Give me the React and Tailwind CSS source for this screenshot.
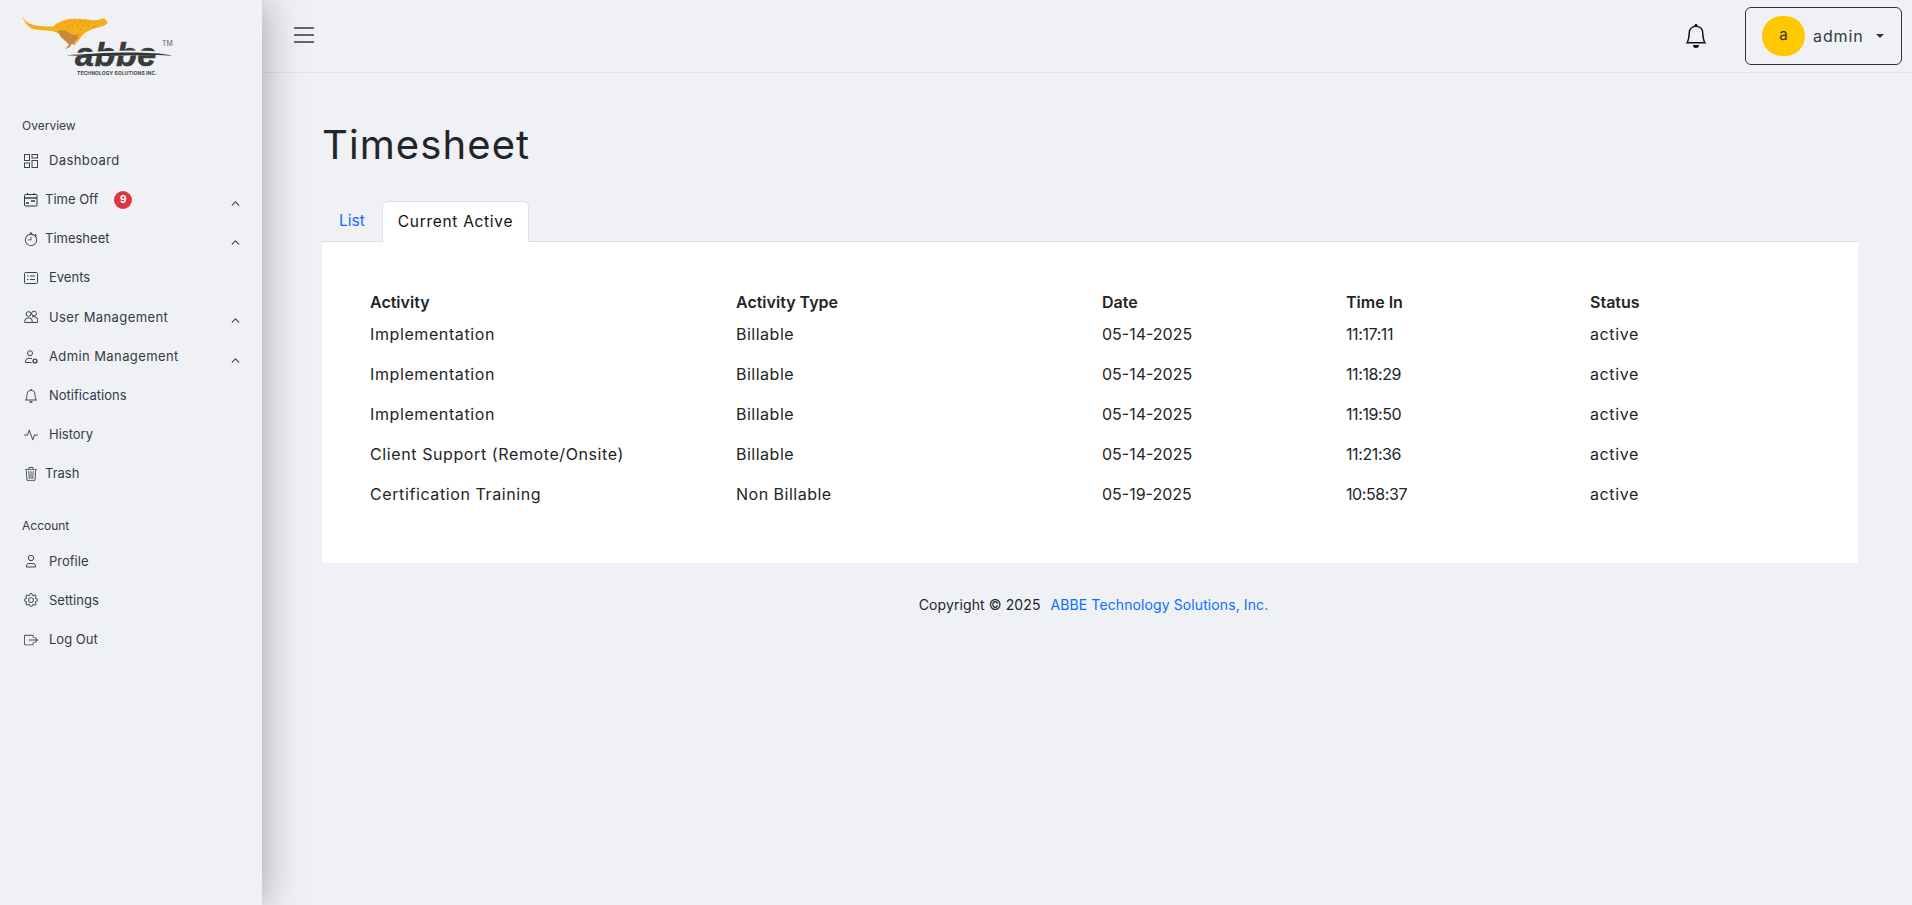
import React from 'react';
import { BsActivity, BsBell, BsBoxArrowRight, BsChevronUp, BsGear, BsStopwatch, BsTrash3 } from 'react-icons/bs';

const font = 'font-["Inter","Noto_Sans",sans-serif]';

// small hand drawn sidebar icons
const DashIcon = () => (
  <svg width="14" height="14" viewBox="0 0 14 14" fill="none" stroke="#3f4652" strokeWidth="1">
    <rect x="0.5" y="0.5" width="5" height="6" />
    <rect x="8" y="0.5" width="5.5" height="3.5" />
    <rect x="0.5" y="9" width="5" height="4.5" />
    <rect x="8" y="6.5" width="5.5" height="7" />
  </svg>
);
const CalIcon = () => (
  <svg width="14" height="14" viewBox="0 0 14 14" fill="none" stroke="#2f3540" strokeWidth="1">
    <rect x="0.5" y="1.5" width="12.5" height="11.5" rx="1" />
    <path d="M3.5 0v2M10 0v2" />
    <path d="M1 5h12" strokeWidth="1.4" />
    <path d="M7 8h4M2 10h3" strokeWidth="1.6" />
  </svg>
);
const EventIcon = () => (
  <svg width="14" height="12" viewBox="0 0 14 12" fill="none" stroke="#3f4652" strokeWidth="1">
    <rect x="0.5" y="0.5" width="13" height="11" rx="1" />
    <path d="M3 4h1.5M3 7.5h1.5M6 4h5M6 7.5h5" />
  </svg>
);
const UsersIcon = () => (
  <svg width="14" height="14" viewBox="0 0 14 14" fill="none" stroke="#3f4652" strokeWidth="1">
    <circle cx="4.5" cy="4" r="2.4" />
    <circle cx="10" cy="3.5" r="2.4" />
    <path d="M0.8 12.5v-1.5a3 3 0 0 1 3-3h1.4a3 3 0 0 1 3 3v1.5zM8 6.8h2.6a3 3 0 0 1 3 3v2.7H8" />
  </svg>
);
const AdminIcon = () => (
  <svg width="14" height="14" viewBox="0 0 14 14" fill="none" stroke="#3f4652" strokeWidth="1">
    <circle cx="6" cy="3.2" r="2.5" />
    <path d="M8 8.4H4.5a3 3 0 0 0-3 2.6v1.5h6" />
    <circle cx="11" cy="11" r="1.9" strokeWidth="1.4" />
  </svg>
);
const ProfileIcon = () => (
  <svg width="14" height="14" viewBox="0 0 14 14" fill="none" stroke="#3f4652" strokeWidth="1">
    <circle cx="7" cy="4" r="2.7" />
    <path d="M2.5 13v-1.2a2.5 2.5 0 0 1 2.5-2.3h4a2.5 2.5 0 0 1 2.5 2.3V13z" />
  </svg>
);

const spots = [
  [150, 38], [165, 34], [180, 36], [195, 33], [210, 36], [225, 38], [240, 40], [172, 46], [188, 46], [204, 46], [220, 48], [158, 50], [236, 50], [196, 58],
];

// logo drawing coordinates are 3x so the shapes stay easy to tweak
const Logo = () => (
  <div className="relative h-[70px] w-[165px]">
    <svg className="absolute left-0 top-0" width="165" height="70" viewBox="0 0 495 210">
      <path d="M21 18 C28 30 36 40 60 46 C80 50 100 50 116 49 C124 38 144 30 165 27 C190 24 215 28 240 31 C250 30 260 27 268 25 L278 37 C276 44 268 48 252 52 C232 56 214 64 202 76 C196 84 190 92 186 98 L166 92 L148 78 L126 68 C110 60 80 62 56 58 C40 54 28 36 21 18 Z" fill="#f6ae1a" />
      <path d="M128 64 C138 58 152 60 166 70 C174 76 184 76 190 72 C192 80 186 88 178 96 L184 104 L170 102 L164 112 L150 118 L162 104 L152 94 L138 82 Z" fill="#c8873a" />
      {spots.map(([cx, cy]) => (
        <circle key={cx + '-' + cy} cx={cx} cy={cy} r="1.8" fill="#b9791f" />
      ))}
    </svg>
    <span className='absolute left-[60px] top-[27px] text-[34px] font-bold italic leading-none tracking-[0.6px] text-[#3a3a3a] [-webkit-text-stroke:0.6px_#3a3a3a] font-["Liberation_Sans",sans-serif]'>abbe</span>
    <svg className="absolute left-0 top-0" width="165" height="70" viewBox="0 0 495 210">
      <path d="M155 133 C230 126 400 116 472 134 C400 128 260 142 155 133 Z" fill="#eff1f5" stroke="#eff1f5" strokeWidth="4" />
      <path d="M155 136 C230 130 400 120 472 137 C400 130 260 143 155 136 Z" fill="#333" />
    </svg>
    <span className={'absolute left-[147px] top-[30px] text-[7px] leading-none text-[#666] ' + font}>TM</span>
    <span className={'absolute left-[62px] top-[61px] whitespace-nowrap text-[5px] font-bold leading-none tracking-[0.1px] text-[#444] ' + font}>TECHNOLOGY SOLUTIONS INC.</span>
  </div>
);

const overview = [
  { label: 'Dashboard', icon: <DashIcon />, wide: true },
  { label: 'Time Off', icon: <CalIcon />, tight: true, badge: 9, caret: true },
  { label: 'Timesheet', icon: <BsStopwatch size={14} />, tight: true, caret: true },
  { label: 'Events', icon: <EventIcon /> },
  { label: 'User Management', icon: <UsersIcon />, wide: true, caret: true },
  { label: 'Admin Management', icon: <AdminIcon />, wide: true, caret: true },
  { label: 'Notifications', icon: <BsBell size={14} /> },
  { label: 'History', icon: <BsActivity size={14} /> },
  { label: 'Trash', icon: <BsTrash3 size={14} />, tight: true },
];

const account = [
  { label: 'Profile', icon: <ProfileIcon /> },
  { label: 'Settings', icon: <BsGear size={14} /> },
  { label: 'Log Out', icon: <BsBoxArrowRight size={14} /> },
];

const rows = [
  ['Implementation', 'Billable', '05-14-2025', '11:17:11', 'active'],
  ['Implementation', 'Billable', '05-14-2025', '11:18:29', 'active'],
  ['Implementation', 'Billable', '05-14-2025', '11:19:50', 'active'],
  ['Client Support (Remote/Onsite)', 'Billable', '05-14-2025', '11:21:36', 'active'],
  ['Certification Training', 'Non Billable', '05-19-2025', '10:58:37', 'active'],
];

const headers = ['Activity', 'Activity Type', 'Date', 'Time In', 'Status'];

const cellSpacing = ['tracking-[0.6px]', 'tracking-[0.5px]', '', 'tracking-[-0.4px]', 'tracking-[0.6px]'];

const NavItem = ({ item }) => (
  <a className="flex h-[39.2px] items-center pl-6 pr-[18px] text-[13px] text-[#343a47]">
    <span className="flex w-[14px] justify-center text-[#3f4652]">{item.icon}</span>
    <span className={(item.tight ? 'ml-[7px]' : 'ml-[11px]') + (item.wide ? ' tracking-[0.4px]' : '')}>{item.label}</span>
    {item.badge && (
      <span className="ml-4 flex h-[18px] w-[18px] items-center justify-center rounded-full bg-[#dc3545] text-[10px] font-bold text-white">
        {item.badge}
      </span>
    )}
    {item.caret && <BsChevronUp size={9} strokeWidth={0.8} className="ml-auto mr-1 mt-[7px] text-[#333]" />}
  </a>
);

const App = () => (
  <div className={'flex h-[905px] overflow-hidden bg-[#eff1f5] text-[#212529] ' + font}>
    <aside className="z-10 flex w-[262px] shrink-0 flex-col bg-[#eff1f5] shadow-[0_0_40px_rgba(0,0,0,0.35)]">
      <div className="pl-[15px] pt-[10px]">
        <Logo />
      </div>
      <p className="mt-[36px] pl-[22px] text-[12px] leading-5 text-[#343a47]">Overview</p>
      <nav className="mt-[5px]">
        {overview.map((item) => (
          <NavItem key={item.label} item={item} />
        ))}
      </nav>
      <p className="mt-[22px] pl-[22px] text-[12px] leading-5 text-[#343a47]">Account</p>
      <nav className="mt-[6px]">
        {account.map((item) => (
          <NavItem key={item.label} item={item} />
        ))}
      </nav>
    </aside>

    <div className="flex min-w-0 flex-1 flex-col">
      <header className="flex h-[73px] items-center justify-between border-b border-[#e1e3e8] pb-px pl-[32px] pr-[10px]">
        <div className="mb-px flex w-[20px] flex-col gap-[4.7px]">
          <span className="h-[2px] bg-[#666]" />
          <span className="h-[2px] bg-[#666]" />
          <span className="h-[2px] bg-[#666]" />
        </div>
        <div className="flex items-center">
          <BsBell size={24} className="text-[#111]" />
          <div className="ml-[37px] flex h-[58px] w-[157px] items-center rounded-md border border-[#333] pl-4">
            <span className="flex h-[40px] w-[43px] items-center justify-center rounded-full bg-[#ffc800] text-[15px] text-[#333]">a</span>
            <span className="ml-2 text-[16px] tracking-[0.9px] text-[#333a47]">admin</span>
            <span className="ml-[12px] h-0 w-0 border-x-[4px] border-t-[4px] border-x-transparent border-t-[#333]" />
          </div>
        </div>
      </header>

      <main className="flex flex-col pl-[60px] pr-[54px]">
        <h1 className="mt-[48px] text-[40px] font-normal leading-[48px] tracking-[1.1px] text-[#212529]">Timesheet</h1>
        <div className="relative mt-[32px] flex h-[41px] items-end border-b border-[#dee2e6]">
          <a className="flex h-[40px] items-center px-[17px] text-[15.5px] text-[#0d6efd]">List</a>
          <a className="-mb-px flex h-[41px] items-center rounded-t-md border border-b-0 border-[#dee2e6] bg-white px-[15px] text-[15.5px] tracking-[0.7px] text-[#111]">
            Current Active
          </a>
        </div>
        <section className="h-[321px] bg-white pl-12 pt-[48px]">
          <div className="grid grid-cols-[366px_366px_244px_244px_244px] text-[16px]">
            {headers.map((h) => (
              <div key={h} className="h-6 font-semibold leading-6">{h}</div>
            ))}
          </div>
          {rows.map((row, i) => (
            <div key={i} className={(i === 0 ? 'mt-2' : 'mt-4') + ' grid grid-cols-[366px_366px_244px_244px_244px] text-[16px] leading-6'}>
              {row.map((cell, j) => (
                <div key={j} className={cellSpacing[j]}>{cell}</div>
              ))}
            </div>
          ))}
        </section>
        <footer className="mt-[31px] pl-[7px] text-center text-[14px] leading-[21px] tracking-[0.1px]">
          Copyright © 2025 <a className="ml-[6px] text-[#0d6efd]">ABBE Technology Solutions, Inc.</a>
        </footer>
      </main>
    </div>
  </div>
);

export default App;
